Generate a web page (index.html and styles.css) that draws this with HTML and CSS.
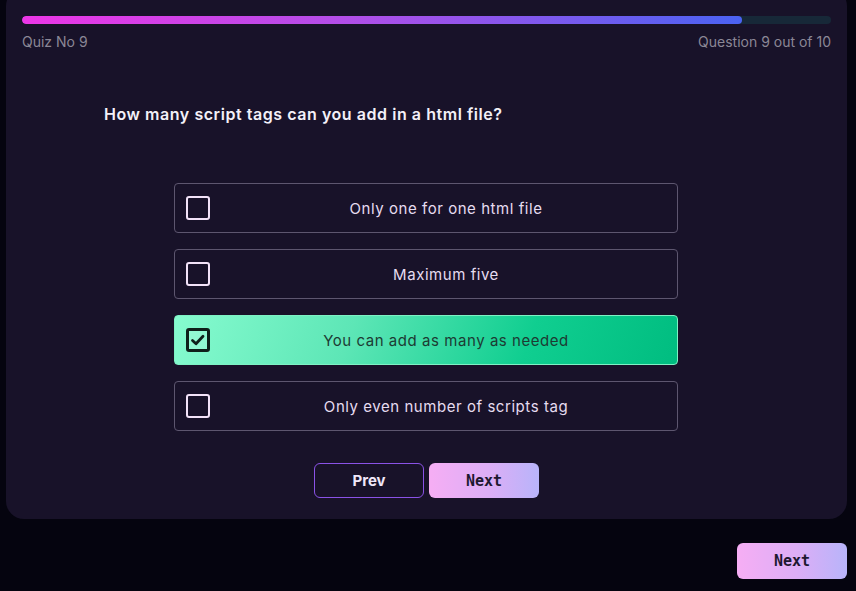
FILE: index.html
```html
<!DOCTYPE html>
<html lang="en">
<head>
  <meta charset="UTF-8">
  <title>Quiz</title>
  <link rel="stylesheet" href="styles.css">
</head>
<body>
<div id="app">
  <div class="card">
    <div class="progress">
      <div class="progress-fill" style="width: 89%"></div>
    </div>
    <div class="meta">
      <span>Quiz No 9</span>
      <span>Question 9 out of 10</span>
    </div>

    <h2 class="question">How many script tags can you add in a html file?</h2>

    <div class="options">
      <div class="option">
        <span class="box"></span>
        <span class="label">Only one for one html file</span>
      </div>
      <div class="option">
        <span class="box"></span>
        <span class="label">Maximum five</span>
      </div>
      <div class="option selected">
        <span class="box">
          <svg width="18" height="18" viewBox="0 0 18 18"><path d="M3.5 9.5l3.5 3.2 7-7.4" fill="none" stroke="#0f1f1a" stroke-width="2.8" stroke-linecap="round" stroke-linejoin="round"/></svg>
        </span>
        <span class="label">You can add as many as needed</span>
      </div>
      <div class="option">
        <span class="box"></span>
        <span class="label">Only even number of scripts tag</span>
      </div>
    </div>

    <div class="nav">
      <button class="btn prev">Prev</button>
      <button class="btn next">Next</button>
    </div>
  </div>

  <div class="footer">
    <button class="btn next">Next</button>
  </div>
</div>
</body>
</html>
```

FILE: styles.css
```css
body {
  margin: 0;
  background-color: #05040f;
  font-family: "Inter", "Open Sans", sans-serif;
  overflow: hidden;
}

#app {
  height: 591px;
}

.card {
  margin: -12px 9px 0 6px;
  padding: 28px 16px 21px;
  background-color: #181229;
  border-radius: 18px;
}

.progress {
  height: 8px;
  background-color: #172838;
  border-radius: 4px;
  overflow: hidden;
}

.progress-fill {
  height: 100%;
  border-radius: 4px;
  background: linear-gradient(90deg, #ec36e6 0%, #b24ee8 45%, #4a63f2 100%);
}

.meta {
  display: flex;
  justify-content: space-between;
  margin-top: 8px;
  font-size: 14px;
  line-height: 20px;
  color: #8b8796;
}

.question {
  margin: 50px 0 0 82px;
  font-size: 16px;
  line-height: 24px;
  font-weight: 600;
  letter-spacing: .55px;
  color: #f3f0f8;
}

.options {
  width: 504px;
  margin: 57px 0 0 152px;
  display: flex;
  flex-direction: column;
  gap: 16px;
}

.option {
  height: 50px;
  box-sizing: border-box;
  display: flex;
  align-items: center;
  padding: 0 11px;
  border: 1px solid #5d566f;
  border-radius: 4px;
  color: #e6dcf0;
  font-size: 15px;
  letter-spacing: .55px;
}

.option .box {
  width: 24px;
  height: 24px;
  box-sizing: border-box;
  border: 2.5px solid #f2e2f8;
  border-radius: 3px;
  display: flex;
  align-items: center;
  justify-content: center;
  flex-shrink: 0;
}

.option .label {
  flex: 1;
  text-align: center;
  margin-left: 16px;
}

.option.selected {
  border-color: #7ef2c4;
  background: linear-gradient(110deg, #86fbcf 0%, #5de6b6 35%, #10ce90 70%, #00bd80 100%);
  color: #1d3b33;
}

.option.selected .box {
  border: 3px solid #0f1f1a;
  background-color: rgba(255, 255, 255, .15);
}

.nav {
  display: flex;
  justify-content: center;
  gap: 5px;
  margin-top: 32px;
}

.btn {
  width: 110px;
  height: 35px;
  border-radius: 6px;
  font-size: 15px;
  font-weight: 700;
  cursor: pointer;
}

.btn.prev {
  background-color: transparent;
  border: 1px solid #8a52e6;
  color: #efe6f8;
  font-family: "Inter", sans-serif;
}

.btn.next {
  border: none;
  background: linear-gradient(90deg, #f6aef4 0%, #dcaef6 55%, #b8b4fa 100%);
  color: #1d1830;
  font-family: "DejaVu Sans Mono", monospace;
}

.footer {
  display: flex;
  justify-content: flex-end;
  margin: 24px 9px 0 0;
}

.footer .btn {
  height: 36px;
}
```
